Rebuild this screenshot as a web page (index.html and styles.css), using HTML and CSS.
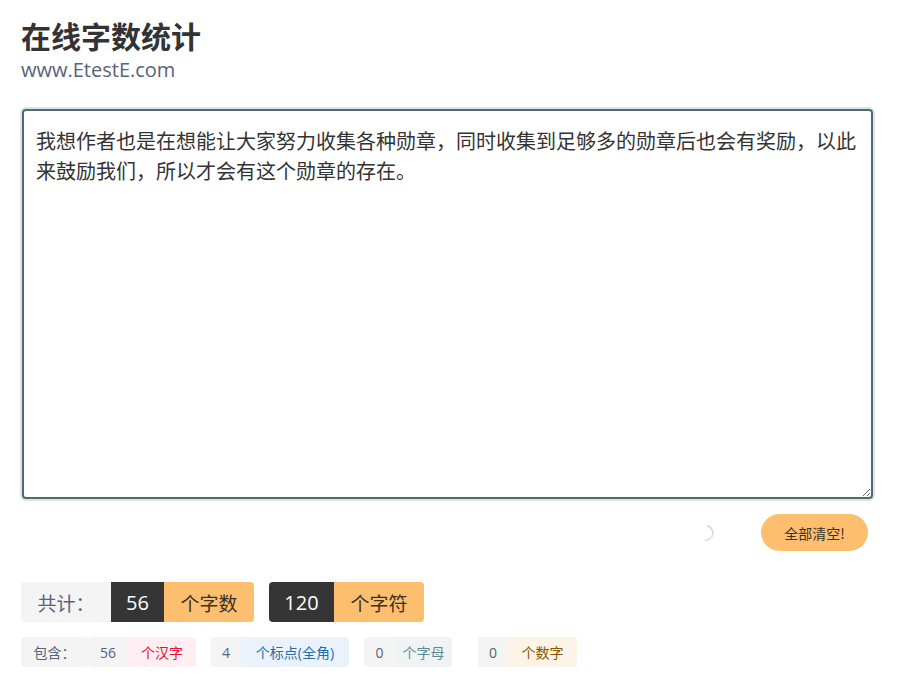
FILE: index.html
```html
<!DOCTYPE html>
<html lang="zh-CN">
<head>
<meta charset="utf-8">
<title>在线字数统计</title>
<link rel="stylesheet" href="styles.css">
</head>
<body>
<div class="page">
  <header class="head">
    <h1 class="title">在线字数统计</h1>
    <div class="site">www.EtestE.com</div>
  </header>

  <textarea class="editor">我想作者也是在想能让大家努力收集各种勋章，同时收集到足够多的勋章后也会有奖励，以此来鼓励我们，所以才会有这个勋章的存在。</textarea>

  <div class="actions">
    <span class="spinner"></span>
    <button class="clear">全部清空!</button>
  </div>

  <div class="total">
    <span class="lbl big">共计：</span>
    <span class="grp">
      <span class="num big">56</span><span class="unit big">个字数</span>
    </span>
    <span class="grp">
      <span class="num big">120</span><span class="unit big">个字符</span>
    </span>
  </div>

  <div class="detail">
    <span class="lbl small">包含：</span>
    <span class="grp">
      <span class="cnt">56</span><span class="tag han">个汉字</span>
    </span>
    <span class="grp">
      <span class="cnt">4</span><span class="tag punc">个标点(全角)</span>
    </span>
    <span class="grp">
      <span class="cnt">0</span><span class="tag alpha">个字母</span>
    </span>
    <span class="grp">
      <span class="cnt">0</span><span class="tag digit">个数字</span>
    </span>
  </div>
</div>
</body>
</html>
```

FILE: styles.css
```css
* { box-sizing: border-box; }
html, body { margin: 0; padding: 0; background: #fff; }
body {
  font-family: "Open Sans", "Noto Sans CJK SC", sans-serif;
  color: #333;
}
.page {
  width: 875px;
  padding: 16px 0 0 21px;
  display: flex;
  flex-direction: column;
}
.head { display: flex; flex-direction: column; }
.title {
  margin: 0;
  font-family: "Noto Sans CJK SC", sans-serif;
  font-size: 30px;
  line-height: 38px;
  font-weight: 700;
  color: #333;
}
.site {
  font-size: 20px;
  line-height: 26px;
  color: #56627e;
  margin-top: 3px;
}
.editor {
  margin: 26px 0 0 1px;
  width: 851px;
  height: 390px;
  border: 2px solid #4e6a72;
  border-radius: 4px;
  box-shadow: 0 0 0 2px #dde4e6;
  outline: none;
  padding: 15px 12px 12px;
  font-family: "Noto Sans CJK SC", sans-serif;
  font-size: 20px;
  line-height: 30px;
  color: #333;
  resize: vertical;
}
.actions {
  display: flex;
  justify-content: flex-end;
  align-items: center;
  margin-top: 15px;
  padding-right: 7px;
  height: 37px;
}
.spinner {
  width: 16px;
  height: 16px;
  border-radius: 50%;
  border: 2px solid transparent;
  border-right-color: #d9d9d9;
  border-bottom-color: #e3e3e3;
  transform: rotate(-35deg);
  margin-right: 47px;
  margin-top: 1px;
}
.clear {
  height: 37px;
  width: 107px;
  border: none;
  border-radius: 19px;
  background: #fdbf6f;
  font-family: "Noto Sans CJK SC", sans-serif;
  font-size: 14px;
  color: #3a3024;
  padding: 0;
}
.total {
  display: flex;
  margin-top: 31px;
  gap: 15px;
}
.total .lbl { margin-right: -15px; }
.grp { display: flex; }
.lbl, .num, .unit, .cnt, .tag {
  display: flex;
  align-items: center;
  justify-content: center;
  white-space: nowrap;
}
.big {
  height: 40px;
  padding: 0 15px;
  font-size: 20px;
}
.lbl.big {
  width: 90px;
  background: #f4f4f5;
  color: #56627e;
  border-radius: 4px 0 0 4px;
  font-family: "Noto Sans CJK SC", sans-serif;
  font-size: 19px;
}
.num {
  background: #353535;
  color: #fff;
  font-size: 20px;
}
.grp .num { border-radius: 4px 0 0 4px; }
.total .grp:nth-child(2) .num { border-radius: 0; }
.unit {
  background: #fdbf6f;
  color: #3a3024;
  border-radius: 0 4px 4px 0;
  font-family: "Noto Sans CJK SC", sans-serif;
  font-size: 19px;
}
.total .grp:nth-child(2) .num { width: 53px; }
.total .grp:nth-child(2) .unit { width: 90px; }
.total .grp:nth-child(3) .num { width: 65px; }
.total .grp:nth-child(3) .unit { width: 90px; }

.detail {
  display: flex;
  margin-top: 15px;
  gap: 15px;
}
.detail .lbl { margin-right: -15px; }
.small, .cnt, .tag {
  height: 30px;
  font-size: 14px;
  border-radius: 4px;
}
.lbl.small {
  width: 67px;
  background: #f4f4f5;
  color: #56627e;
  font-family: "Noto Sans CJK SC", sans-serif;
}
.cnt {
  background: #f4f4f5;
  color: #56627e;
  padding: 0 11px;
  min-width: 30px;
  border-radius: 4px 0 0 4px;
}
.tag {
  padding: 0 11px;
  border-radius: 0 4px 4px 0;
  font-family: "Open Sans", "Noto Sans CJK SC", sans-serif;
}
.han { background: #ffeef2; color: #e0103f; }
.punc { background: #eaf3fb; color: #1f6fae; }
.alpha { background: #eff3f4; color: #5f8b94; }
.digit { background: #fdf3e6; color: #8a5400; }
.detail .grp:nth-child(2) .cnt { width: 40px; }
.detail .grp:nth-child(2) .tag { width: 68px; }
.detail .grp:nth-child(3) .cnt { width: 30px; }
.detail .grp:nth-child(3) .tag { width: 108px; }
.detail .grp:nth-child(4) .cnt { width: 31px; }
.detail .grp:nth-child(4) .tag { width: 57px; }
.detail .grp:nth-child(5) { margin-left: 11px; }
.detail .grp:nth-child(5) .cnt { width: 30px; }
.detail .grp:nth-child(5) .tag { width: 69px; }
```
